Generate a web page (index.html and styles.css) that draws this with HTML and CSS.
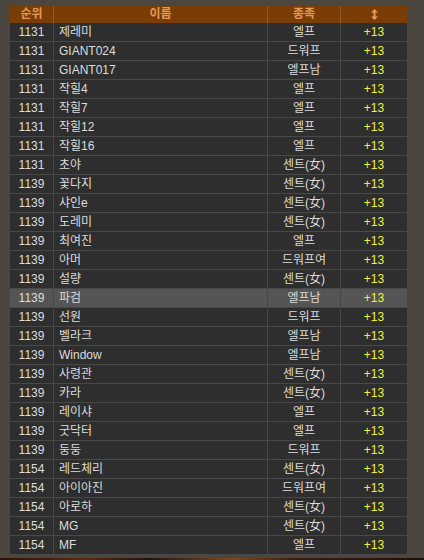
FILE: index.html
```html
<!DOCTYPE html>
<html lang="ko">
<head>
    <meta charset="UTF-8">
    <title>랭킹</title>
    <link rel="stylesheet" href="styles.css">
</head>
<body>
    <div class="page">
        <div class="ranking">
            <div class="row head">
                <div class="cell">순위</div>
                <div class="cell">이름</div>
                <div class="cell">종족</div>
                <div class="cell">
                    <svg class="sort" width="7" height="11" viewBox="0 0 7 11">
                        <path d="M3.5 0 L7 3.5 H4.5 V7.5 H7 L3.5 11 L0 7.5 H2.5 V3.5 H0 Z" fill="#e39a55"/>
                    </svg>
                </div>
            </div>
            <div class="row"><div class="cell">1131</div><div class="cell name">제레미</div><div class="cell">엘프</div><div class="cell lv">+13</div></div>
            <div class="row"><div class="cell">1131</div><div class="cell name">GIANT024</div><div class="cell">드워프</div><div class="cell lv">+13</div></div>
            <div class="row"><div class="cell">1131</div><div class="cell name">GIANT017</div><div class="cell">엘프남</div><div class="cell lv">+13</div></div>
            <div class="row"><div class="cell">1131</div><div class="cell name">작힐4</div><div class="cell">엘프</div><div class="cell lv">+13</div></div>
            <div class="row"><div class="cell">1131</div><div class="cell name">작힐7</div><div class="cell">엘프</div><div class="cell lv">+13</div></div>
            <div class="row"><div class="cell">1131</div><div class="cell name">작힐12</div><div class="cell">엘프</div><div class="cell lv">+13</div></div>
            <div class="row"><div class="cell">1131</div><div class="cell name">작힐16</div><div class="cell">엘프</div><div class="cell lv">+13</div></div>
            <div class="row"><div class="cell">1131</div><div class="cell name">초야</div><div class="cell">센트(女)</div><div class="cell lv">+13</div></div>
            <div class="row"><div class="cell">1139</div><div class="cell name">꽃다지</div><div class="cell">센트(女)</div><div class="cell lv">+13</div></div>
            <div class="row"><div class="cell">1139</div><div class="cell name">샤인e</div><div class="cell">센트(女)</div><div class="cell lv">+13</div></div>
            <div class="row"><div class="cell">1139</div><div class="cell name">도레미</div><div class="cell">센트(女)</div><div class="cell lv">+13</div></div>
            <div class="row"><div class="cell">1139</div><div class="cell name">최여진</div><div class="cell">엘프</div><div class="cell lv">+13</div></div>
            <div class="row"><div class="cell">1139</div><div class="cell name">아머</div><div class="cell">드워프여</div><div class="cell lv">+13</div></div>
            <div class="row"><div class="cell">1139</div><div class="cell name">설량</div><div class="cell">센트(女)</div><div class="cell lv">+13</div></div>
            <div class="row selected"><div class="cell">1139</div><div class="cell name">파검</div><div class="cell">엘프남</div><div class="cell lv">+13</div></div>
            <div class="row"><div class="cell">1139</div><div class="cell name">선원</div><div class="cell">드워프</div><div class="cell lv">+13</div></div>
            <div class="row"><div class="cell">1139</div><div class="cell name">벨라크</div><div class="cell">엘프남</div><div class="cell lv">+13</div></div>
            <div class="row"><div class="cell">1139</div><div class="cell name">Window</div><div class="cell">엘프남</div><div class="cell lv">+13</div></div>
            <div class="row"><div class="cell">1139</div><div class="cell name">사령관</div><div class="cell">센트(女)</div><div class="cell lv">+13</div></div>
            <div class="row"><div class="cell">1139</div><div class="cell name">카라</div><div class="cell">센트(女)</div><div class="cell lv">+13</div></div>
            <div class="row"><div class="cell">1139</div><div class="cell name">레이샤</div><div class="cell">엘프</div><div class="cell lv">+13</div></div>
            <div class="row"><div class="cell">1139</div><div class="cell name">굿닥터</div><div class="cell">엘프</div><div class="cell lv">+13</div></div>
            <div class="row"><div class="cell">1139</div><div class="cell name">둥둥</div><div class="cell">드워프</div><div class="cell lv">+13</div></div>
            <div class="row"><div class="cell">1154</div><div class="cell name">레드체리</div><div class="cell">센트(女)</div><div class="cell lv">+13</div></div>
            <div class="row"><div class="cell">1154</div><div class="cell name">아이아진</div><div class="cell">드워프여</div><div class="cell lv">+13</div></div>
            <div class="row"><div class="cell">1154</div><div class="cell name">아로하</div><div class="cell">센트(女)</div><div class="cell lv">+13</div></div>
            <div class="row"><div class="cell">1154</div><div class="cell name">MG</div><div class="cell">센트(女)</div><div class="cell lv">+13</div></div>
            <div class="row"><div class="cell">1154</div><div class="cell name">MF</div><div class="cell">엘프</div><div class="cell lv">+13</div></div>
        </div>
        <div class="footer-art"></div>
    </div>
</body>
</html>
```

FILE: styles.css
```css
body {
    margin: 0;
    background-color: #4b473f;
    font-family: "Liberation Sans", "Noto Sans CJK KR", sans-serif;
    font-size: 12px;
    color: #dcdcdc;
}

.page {
    padding: 6px 17px 0 10px;
    overflow: hidden;
    height: 560px;
    box-sizing: border-box;
}

.ranking {
    width: 397px;
    background-color: #2e2e2e;
}

.row {
    display: grid;
    grid-template-columns: 43px 214px 73px 67px;
    height: 18px;
    border-bottom: 1px solid #484848;
}

.cell {
    display: flex;
    align-items: center;
    justify-content: center;
    line-height: 18px;
    white-space: nowrap;
}

.cell + .cell {
    border-left: 1px solid #484848;
}

.cell.name {
    justify-content: flex-start;
    padding-left: 5px;
}

.cell.lv {
    color: #f1f13c;
}

.row.head {
    height: 17px;
    border-bottom: none;
    background-color: #7a3d06;
}

.row.head .cell {
    line-height: 17px;
    color: #e39a55;
    font-weight: bold;
}

.row.head .cell + .cell {
    border-left-color: #8a5a30;
}

.row.selected {
    background-color: #555555;
}

.footer-art {
    height: 6px;
    margin: 3px -17px 0 -10px;
    background: linear-gradient(to right, #2a1008, #5a2a10 20%, #1e1410 35%, #7a4a20 55%, #3a1a10 70%, #201008);
}
```
